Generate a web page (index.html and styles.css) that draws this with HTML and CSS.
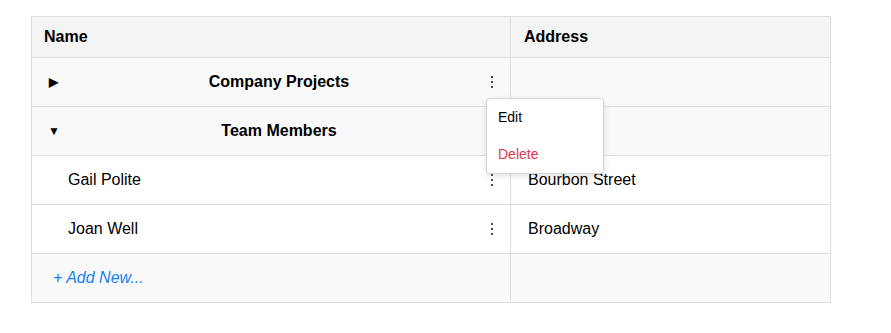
FILE: index.html
```html
<html lang="en">
<head>
    <link rel="stylesheet" href="styles.css">
    <meta charset="UTF-8">
    <title>Tree Grid</title>
</head>
<body>
    <div id="grid-wrap">
        <table class="grid">
            <thead>
                <tr>
                    <th class="col-name">Name</th>
                    <th class="col-address">Address</th>
                </tr>
            </thead>
            <tbody>
                <tr class="group-row">
                    <td>
                        <div class="group-cell">
                            <span class="caret">&#9654;</span>
                            <span class="group-title">Company Projects</span>
                            <span class="kebab-holder">
                                <span class="kebab"><i></i><i></i><i></i></span>
                                <!-- open row menu -->
                                <div class="row-menu">
                                    <div class="menu-item">Edit</div>
                                    <div class="menu-item danger">Delete</div>
                                </div>
                            </span>
                        </div>
                    </td>
                    <td></td>
                </tr>
                <tr class="group-row">
                    <td>
                        <div class="group-cell">
                            <span class="caret down">&#9660;</span>
                            <span class="group-title">Team Members</span>
                            <span class="kebab-holder"></span>
                        </div>
                    </td>
                    <td></td>
                </tr>
                <tr class="item-row">
                    <td>
                        <div class="item-cell">
                            <span class="item-name">Gail Polite</span>
                            <span class="kebab"><i></i><i></i><i></i></span>
                        </div>
                    </td>
                    <td class="address">Bourbon Street</td>
                </tr>
                <tr class="item-row">
                    <td>
                        <div class="item-cell">
                            <span class="item-name">Joan Well</span>
                            <span class="kebab"><i></i><i></i><i></i></span>
                        </div>
                    </td>
                    <td class="address">Broadway</td>
                </tr>
                <tr class="add-row">
                    <td><a class="add-new" href="#">+ Add New...</a></td>
                    <td></td>
                </tr>
            </tbody>
        </table>
    </div>
</body>
</html>
```

FILE: styles.css
```css
body {
    margin: 0;
    background-color: #fff;
    font-family: "Liberation Sans", Arial, sans-serif;
    color: #000;
}

#grid-wrap {
    padding: 16px 31px;
}

.grid {
    border-collapse: collapse;
    width: 800px;
    font-size: 16px;
}

.grid th,
.grid td {
    border: 1px solid #dedede;
    padding: 0 13px;
    text-align: left;
}

.grid thead th {
    background-color: #f4f4f4;
    font-weight: bold;
    height: 41px;
}

.grid thead th.col-name {
    padding-left: 12px;
}

.col-name {
    width: 453px;
}

.grid tbody td {
    height: 49px;
}

.group-row td {
    background-color: #f9f9f9;
    font-weight: bold;
}

.group-cell {
    display: flex;
    align-items: center;
}

.caret {
    font-size: 12px;
    width: 16px;
    padding-left: 4px;
}

.caret.down {
    font-size: 12px;
    padding-left: 3px;
    width: 17px;
}

.group-title {
    flex: 1;
    text-align: center;
    padding-left: 5px;
}

.kebab-holder {
    position: relative;
    width: 8px;
    height: 12px;
    margin-right: 1px;
}

.kebab {
    display: flex;
    flex-direction: column;
    align-items: center;
    gap: 3px;
    width: 8px;
}

.kebab i {
    display: block;
    width: 2px;
    height: 2px;
    background-color: #4a4a4a;
}

.row-menu {
    position: absolute;
    top: 22px;
    left: -2px;
    width: 116px;
    background-color: #fff;
    border: 1px solid #d6d6d6;
    border-radius: 4px;
    box-shadow: 0 2px 6px rgba(0, 0, 0, 0.12);
    padding: 0;
    z-index: 2;
    font-weight: normal;
}

.menu-item {
    font-size: 14px;
    padding: 9px 11px;
    line-height: 19px;
}

.menu-item.danger {
    color: #e0384f;
}

.item-row td {
    background-color: #fff;
}

.item-cell {
    display: flex;
    align-items: center;
    padding-left: 23px;
}

.item-name {
    flex: 1;
}

.item-cell .kebab {
    margin-right: 1px;
}

.address {
    padding-left: 17px !important;
}

.add-row td {
    background-color: #f9f9f9;
}

.add-new {
    color: #1a7ff0;
    font-style: italic;
    text-decoration: none;
    padding-left: 8px;
}
```
